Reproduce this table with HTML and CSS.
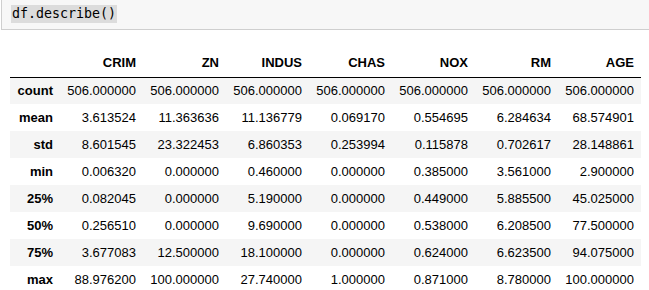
FILE: index.html
```html
<!DOCTYPE html>
<html>
<head>
<meta charset="utf-8">
<link rel="stylesheet" href="styles.css">
</head>
<body>
<div class="cell">
  <span class="code">df.describe()</span>
</div>
<div class="output">
<table class="df">
  <thead>
    <tr><th></th><th>CRIM</th><th>ZN</th><th>INDUS</th><th>CHAS</th><th>NOX</th><th>RM</th><th>AGE</th></tr>
  </thead>
  <tbody>
    <tr><th>count</th><td>506.000000</td><td>506.000000</td><td>506.000000</td><td>506.000000</td><td>506.000000</td><td>506.000000</td><td>506.000000</td></tr>
    <tr><th>mean</th><td>3.613524</td><td>11.363636</td><td>11.136779</td><td>0.069170</td><td>0.554695</td><td>6.284634</td><td>68.574901</td></tr>
    <tr><th>std</th><td>8.601545</td><td>23.322453</td><td>6.860353</td><td>0.253994</td><td>0.115878</td><td>0.702617</td><td>28.148861</td></tr>
    <tr><th>min</th><td>0.006320</td><td>0.000000</td><td>0.460000</td><td>0.000000</td><td>0.385000</td><td>3.561000</td><td>2.900000</td></tr>
    <tr><th>25%</th><td>0.082045</td><td>0.000000</td><td>5.190000</td><td>0.000000</td><td>0.449000</td><td>5.885500</td><td>45.025000</td></tr>
    <tr><th>50%</th><td>0.256510</td><td>0.000000</td><td>9.690000</td><td>0.000000</td><td>0.538000</td><td>6.208500</td><td>77.500000</td></tr>
    <tr><th>75%</th><td>3.677083</td><td>12.500000</td><td>18.100000</td><td>0.000000</td><td>0.624000</td><td>6.623500</td><td>94.075000</td></tr>
    <tr><th>max</th><td>88.976200</td><td>100.000000</td><td>27.740000</td><td>1.000000</td><td>0.871000</td><td>8.780000</td><td>100.000000</td></tr>
  </tbody>
</table>
</div>
</body>
</html>
```
FILE: styles.css
```css
html, body {
  margin: 0;
  padding: 0;
  background: #fff;
  overflow: hidden;
}
.cell {
  margin-left: 1px;
  background: #f7f7f7;
  border-left: 1px solid #cfcfcf;
  border-bottom: 1px solid #cfcfcf;
  padding-left: 9px;
  padding-top: 4px;
  box-sizing: border-box;
  height: 30px;
}
.code {
  display: inline-block;
  font-family: "DejaVu Sans Mono", "Liberation Mono", monospace;
  font-size: 13.3px;
  line-height: 18px;
  color: #000;
  background: #dcdcdc;
  padding: 0 1px;
}
.output {
  padding: 19px 0 0 10px;
}
.df {
  border-collapse: collapse;
  border-spacing: 0;
  font-family: "Liberation Sans", Arial, sans-serif;
  font-size: 13px;
  color: #000;
}
.df th, .df td {
  height: 27px;
  padding: 0 7px;
  text-align: right;
  vertical-align: middle;
  white-space: nowrap;
  box-sizing: border-box;
}
.df td {
  width: 83px;
  min-width: 83px;
}
.df thead th {
  font-weight: bold;
  border-bottom: 1px solid #000;
  height: 28px;
}
.df tbody th {
  font-weight: bold;
  width: 50px;
  min-width: 50px;
}
.df thead th:first-child {
  width: 50px;
}
.df tbody tr:nth-child(odd) {
  background: #f5f5f5;
}
```
